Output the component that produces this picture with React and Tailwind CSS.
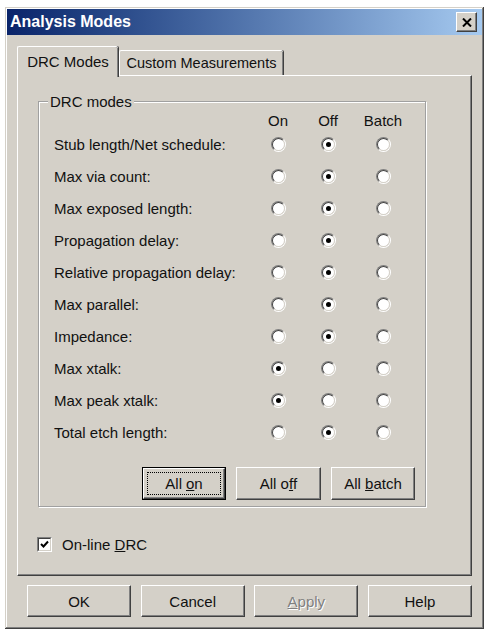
import React from "react";

const raised =
  "border border-t-white border-l-white border-r-[#404040] border-b-[#404040] shadow-[inset_-1px_-1px_0_#808080]";

function Radio({ checked }) {
  return (
    <span className="flex h-[15px] w-[15px] rounded-full border border-t-[#808080] border-l-[#808080] border-r-white border-b-white">
      <span className="flex flex-1 items-center justify-center rounded-full border border-t-[#404040] border-l-[#404040] border-r-[#d4d0c8] border-b-[#d4d0c8] bg-white">
        {checked && <span className="h-[5px] w-[5px] rounded-full bg-black" />}
      </span>
    </span>
  );
}

function Btn({ children, className = "", w = "w-[104px]", h = "h-[32px]" }) {
  return (
    <div className={`${w} ${h} ${raised} flex items-center justify-center bg-[#d4d0c8] ${className}`}>
      {children}
    </div>
  );
}

const rows = [
  ["Stub length/Net schedule:", 1],
  ["Max via count:", 1],
  ["Max exposed length:", 1],
  ["Propagation delay:", 1],
  ["Relative propagation delay:", 1],
  ["Max parallel:", 1],
  ["Impedance:", 1],
  ["Max xtalk:", 0],
  ["Max peak xtalk:", 0],
  ["Total etch length:", 1],
];

export default function App() {
  return (
    <div className="h-[634px] w-[492px] bg-white pl-[5px] pt-[7px] font-['Liberation_Sans',Arial,sans-serif] text-[15px] leading-none text-[#111]">
      <div className="flex h-[622px] w-[479px] flex-col bg-[#d4d0c8] p-[2px] shadow-[inset_-1px_-1px_0_#404040,inset_1px_1px_0_#d4d0c8,inset_-2px_-2px_0_#808080,inset_2px_2px_0_#ffffff]">
        {/* title bar */}
        <div className="flex h-[26px] items-center justify-between bg-gradient-to-r from-[#0a246a] to-[#a6caf0] pl-[3px] pr-[5px]">
          <span className="text-[16px] font-bold text-white">Analysis Modes</span>
          <div className={`flex h-[20px] w-[21px] items-center justify-center bg-[#d4d0c8] ${raised}`}>
            <svg width="10" height="9" viewBox="0 0 10 9">
              <path d="M1 0.5 L9 8.5 M9 0.5 L1 8.5" stroke="#000" strokeWidth="2" />
            </svg>
          </div>
        </div>

        <div className="flex flex-col px-[10px] pt-[11px]">
          {/* tabs */}
          <div className="flex h-[29px] items-end">
            <div className="relative z-10 -mb-[2px] flex h-[31px] w-[101px] items-center justify-center rounded-t-[2px] border-l border-t border-white bg-[#d4d0c8] pb-[1px] shadow-[inset_-1px_0_0_#808080,1px_0_0_#404040]">
              DRC Modes
            </div>
            <div className="ml-[1px] flex h-[25px] w-[164px] items-center justify-center rounded-t-[2px] border-l border-t border-white bg-[#d4d0c8] pt-[1px] text-[14.5px] shadow-[inset_-1px_0_0_#808080,1px_0_0_#404040]">
              Custom Measurements
            </div>
          </div>

          {/* panel */}
          <div className="flex h-[501px] w-[455px] flex-col border border-l-white border-t-white border-r-[#404040] border-b-[#404040] shadow-[inset_-1px_-1px_0_#808080]">
            {/* group box */}
            <div className="relative ml-[20px] mt-[25px] flex h-[406px] w-[388px] flex-col border border-[#a0a0a0] pl-[15px] pr-[10px] pt-[10px] shadow-[1px_1px_0_#ffffff,inset_1px_1px_0_#ffffff]">
              <span className="absolute -top-[8px] left-[9px] bg-[#d4d0c8] px-[2px]">DRC modes</span>
              <div className="grid h-[16px] grid-cols-[199px_50px_50px_60px] items-center">
                <span />
                <span className="text-center">On</span>
                <span className="text-center">Off</span>
                <span className="text-center">Batch</span>
              </div>
              {rows.map(([label, sel]) => (
                <div key={label} className="grid h-[32px] grid-cols-[199px_50px_50px_60px] items-center">
                  <span>{label}</span>
                  {[0, 1, 2].map((i) => (
                    <span key={i} className="flex justify-center">
                      <Radio checked={sel === i} />
                    </span>
                  ))}
                </div>
              ))}
              <div className="mt-[19px] flex justify-end gap-[10px]">
                <div className="h-[33px] w-[84px] border border-black">
                  <div className={`flex h-full w-full items-center justify-center bg-[#d4d0c8] p-[3px] ${raised}`}>
                    <div className="flex h-full w-full items-center justify-center border border-dotted border-black">
                      All <span className="ml-[4px] underline">o</span>n
                    </div>
                  </div>
                </div>
                <Btn w="w-[85px]" h="h-[33px]">
                  All o<span className="underline">f</span>f
                </Btn>
                <Btn w="w-[84px]" h="h-[33px]">
                  All&nbsp;<span className="underline">b</span>atch
                </Btn>
              </div>
            </div>

            {/* checkbox */}
            <div className="ml-[19px] mt-[30px] flex items-center gap-[10px]">
              <span className="flex h-[15px] w-[15px] border border-t-[#808080] border-l-[#808080] border-r-white border-b-white">
                <span className="flex flex-1 items-center justify-center border border-t-[#404040] border-l-[#404040] border-r-[#d4d0c8] border-b-[#d4d0c8] bg-white">
                  <svg width="9" height="9" viewBox="0 0 9 9">
                    <path d="M1 4 L3.5 6.5 L8 1.5" stroke="#000" strokeWidth="2" fill="none" />
                  </svg>
                </span>
              </span>
              <span>
                On-line <span className="underline">D</span>RC
              </span>
            </div>
          </div>

          {/* bottom buttons */}
          <div className="mt-[9px] flex justify-between pl-[10px]">
            <Btn>OK</Btn>
            <Btn>Cancel</Btn>
            <Btn>
              <span className="text-[#808080] [text-shadow:1px_1px_0_#ffffff]">
                <span className="underline">A</span>pply
              </span>
            </Btn>
            <Btn>Help</Btn>
          </div>
        </div>
      </div>
    </div>
  );
}
